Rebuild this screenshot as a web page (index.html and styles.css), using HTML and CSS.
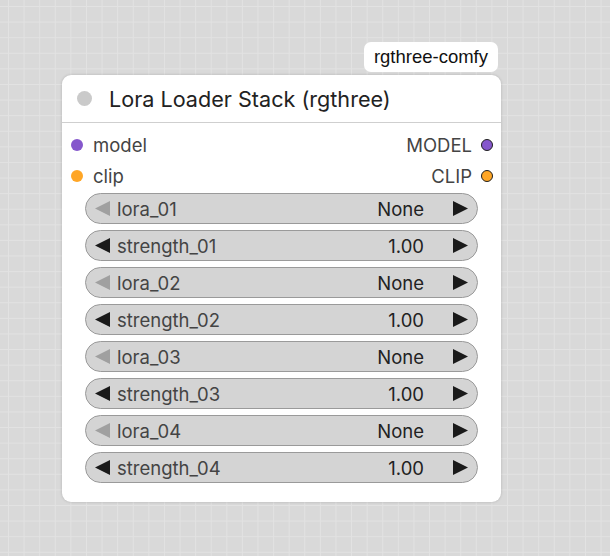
FILE: index.html
```html
<!DOCTYPE html>
<html>
<head>
<meta charset="utf-8">
<link rel="stylesheet" href="styles.css">
</head>
<body>
<div class="canvas">
  <div class="badge-row"><div class="badge">rgthree-comfy</div></div>
  <div class="node">
    <div class="title"><span class="title-dot"></span><span class="title-text">Lora Loader Stack (rgthree)</span></div>
    <div class="slots">
      <div class="slot"><span class="in-dot purple"></span><span class="slot-name">model</span><span class="spacer"></span><span class="slot-name">MODEL</span><span class="out-dot purple"></span></div>
      <div class="slot"><span class="in-dot orange"></span><span class="slot-name">clip</span><span class="spacer"></span><span class="slot-name">CLIP</span><span class="out-dot orange"></span></div>
    </div>
    <div class="widgets">
      <div class="widget"><svg class="arrow dim" viewBox="0 0 15 15"><polygon points="15,0 15,15 0,7.5"/></svg><span class="w-label">lora_01</span><span class="w-value">None</span><svg class="arrow" viewBox="0 0 15 15"><polygon points="0,0 0,15 15,7.5"/></svg></div>
      <div class="widget"><svg class="arrow" viewBox="0 0 15 15"><polygon points="15,0 15,15 0,7.5"/></svg><span class="w-label">strength_01</span><span class="w-value">1.00</span><svg class="arrow" viewBox="0 0 15 15"><polygon points="0,0 0,15 15,7.5"/></svg></div>
      <div class="widget"><svg class="arrow dim" viewBox="0 0 15 15"><polygon points="15,0 15,15 0,7.5"/></svg><span class="w-label">lora_02</span><span class="w-value">None</span><svg class="arrow" viewBox="0 0 15 15"><polygon points="0,0 0,15 15,7.5"/></svg></div>
      <div class="widget"><svg class="arrow" viewBox="0 0 15 15"><polygon points="15,0 15,15 0,7.5"/></svg><span class="w-label">strength_02</span><span class="w-value">1.00</span><svg class="arrow" viewBox="0 0 15 15"><polygon points="0,0 0,15 15,7.5"/></svg></div>
      <div class="widget"><svg class="arrow dim" viewBox="0 0 15 15"><polygon points="15,0 15,15 0,7.5"/></svg><span class="w-label">lora_03</span><span class="w-value">None</span><svg class="arrow" viewBox="0 0 15 15"><polygon points="0,0 0,15 15,7.5"/></svg></div>
      <div class="widget"><svg class="arrow" viewBox="0 0 15 15"><polygon points="15,0 15,15 0,7.5"/></svg><span class="w-label">strength_03</span><span class="w-value">1.00</span><svg class="arrow" viewBox="0 0 15 15"><polygon points="0,0 0,15 15,7.5"/></svg></div>
      <div class="widget"><svg class="arrow dim" viewBox="0 0 15 15"><polygon points="15,0 15,15 0,7.5"/></svg><span class="w-label">lora_04</span><span class="w-value">None</span><svg class="arrow" viewBox="0 0 15 15"><polygon points="0,0 0,15 15,7.5"/></svg></div>
      <div class="widget"><svg class="arrow" viewBox="0 0 15 15"><polygon points="15,0 15,15 0,7.5"/></svg><span class="w-label">strength_04</span><span class="w-value">1.00</span><svg class="arrow" viewBox="0 0 15 15"><polygon points="0,0 0,15 15,7.5"/></svg></div>
    </div>
  </div>
</div>
</body>
</html>
```
FILE: styles.css
```css
html, body {
  margin: 0;
  padding: 0;
}
body {
  width: 610px;
  height: 556px;
  overflow: hidden;
  background-color: #d9d9d9;
  background-image:
    linear-gradient(to right, #e2e2e2 1px, transparent 1px),
    linear-gradient(to bottom, #e2e2e2 1px, transparent 1px);
  background-size: 15.6px 15.6px;
  background-position: 8px 6px;
  font-family: Inter, "Noto Sans", sans-serif;
}
.canvas {
  padding: 42px 0 0 62px;
  width: 439px;
}
.badge-row {
  display: flex;
  justify-content: flex-end;
  padding-right: 3px;
  margin-bottom: 3px;
}
.badge {
  height: 30px;
  box-sizing: border-box;
  padding: 0 10px;
  background: #fff;
  border-radius: 7px;
  display: flex;
  align-items: center;
  font-family: "Liberation Sans", Arial, sans-serif;
  font-size: 18.5px;
  color: #111;
}
.node {
  width: 439px;
  height: 427px;
  box-sizing: border-box;
  background: #fff;
  border-radius: 9px;
  box-shadow: 0 0 3px rgba(0, 0, 0, 0.18);
}
.title {
  height: 47px;
  border-bottom: 1px solid #cfcfcf;
  display: flex;
  align-items: center;
  padding-left: 15px;
}
.title-dot {
  width: 15px;
  height: 15px;
  border-radius: 50%;
  background: #cacaca;
  margin-right: 17px;
}
.title-text {
  font-size: 21.6px;
  color: #222;
}
.slots {
  padding-top: 6px;
}
.slot {
  height: 31px;
  display: flex;
  align-items: center;
  padding: 0 8px 0 9px;
}
.spacer {
  flex: 1;
}
.slot-name {
  font-size: 18.5px;
  color: #444;
}
.in-dot {
  width: 12px;
  height: 12px;
  border-radius: 50%;
  margin-right: 10px;
}
.out-dot {
  width: 10px;
  height: 10px;
  border-radius: 50%;
  border: 1.5px solid #1e1e1e;
  margin-left: 9px;
}
.purple { background: #8557cc; }
.orange { background: #ffa626; }
.widgets {
  padding: 2px 23px 0 23px;
  display: flex;
  flex-direction: column;
  gap: 6px;
}
.widget {
  height: 31px;
  box-sizing: border-box;
  border: 1px solid #9a9a9a;
  border-radius: 16px;
  background: #d4d4d4;
  display: flex;
  align-items: center;
  padding: 0 9px 0 9px;
}
.arrow {
  width: 15px;
  height: 15px;
  fill: #1a1a1a;
  flex: none;
}
.arrow.dim {
  fill: #a0a0a0;
}
.w-label {
  margin-left: 7px;
  font-size: 18.5px;
  color: #444;
  flex: 1;
}
.w-value {
  font-size: 18.5px;
  color: #222;
  margin-right: 29px;
}
```
